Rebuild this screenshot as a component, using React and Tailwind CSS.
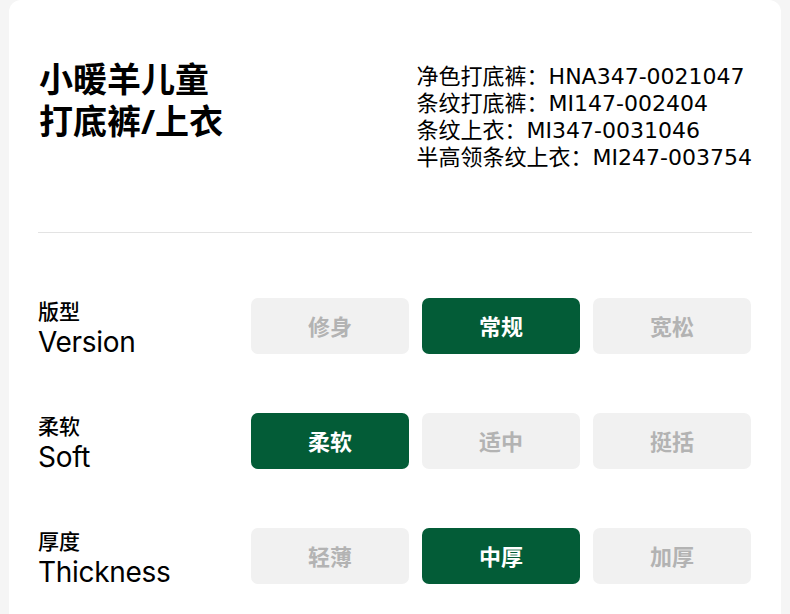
import React from 'react';

const cjk = { fontFamily: '"Noto Sans", "Noto Sans CJK SC", sans-serif' };

const codes = [
  '净色打底裤：HNA347-0021047',
  '条纹打底裤：MI147-002404',
  '条纹上衣：MI347-0031046',
  '半高领条纹上衣：MI247-003754',
];

const rows = [
  { zh: '版型', en: 'Version', options: ['修身', '常规', '宽松'], active: 1 },
  { zh: '柔软', en: 'Soft', options: ['柔软', '适中', '挺括'], active: 0 },
  { zh: '厚度', en: 'Thickness', options: ['轻薄', '中厚', '加厚'], active: 1 },
];

const OptionRow = ({ row }) => (
  <div className="flex items-start h-[56px]">
    <div className="w-[213px] flex flex-col text-black">
      <span className="text-[21px] leading-[26px] font-medium">{row.zh}</span>
      <span className="text-[28px] leading-[32px] mt-[2px] tracking-[-0.3px]" style={{ fontFamily: 'Inter, "Noto Sans", sans-serif' }}>{row.en}</span>
    </div>
    <div className="grid grid-cols-[158px_158px_158px] gap-[13px]">
      {row.options.map((opt, i) => (
        <div
          key={opt}
          className={`h-[56px] rounded-[7px] flex items-center justify-center text-[22px] font-bold ${
            i === row.active ? 'bg-[#035c37] text-white' : 'bg-[#f1f1f1] text-[#b3b3b3]'
          }`}
        >
          {opt}
        </div>
      ))}
    </div>
  </div>
);

export default function App() {
  return (
    <div className="w-[790px] h-[614px] bg-[#f5f5f5] px-[9px] overflow-hidden" style={cjk}>
      <div className="bg-white h-full rounded-t-[12px] px-[29px] pt-[60px]">
        <div className="flex justify-between h-[116px]">
          <div className="text-[34px] leading-[42px] font-bold text-black ml-[1px] mt-[-2px]">
            <div>小暖羊儿童</div>
            <div>打底裤/上衣</div>
          </div>
          <div className="text-[22px] leading-[27px] text-black pt-[3px]" style={{ fontFamily: '"DejaVu Sans", "Noto Sans CJK SC", sans-serif' }}>
            {codes.map((c) => (
              <div key={c}>{c}</div>
            ))}
          </div>
        </div>
        <div className="h-px bg-[#e3e3e3] mt-[56px]" />
        <div className="flex flex-col gap-[59px] pt-[65px]">
          {rows.map((r) => (
            <OptionRow key={r.en} row={r} />
          ))}
        </div>
      </div>
    </div>
  );
}
